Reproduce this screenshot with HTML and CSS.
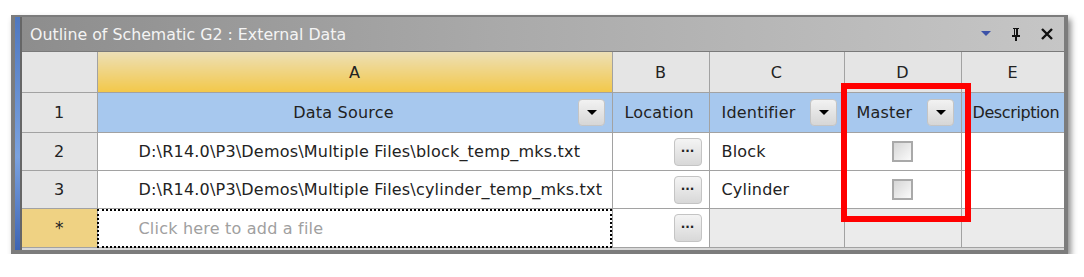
FILE: index.html
```html
<!DOCTYPE html>
<html lang="en">
<head>
    <meta charset="UTF-8">
    <title>Outline of Schematic G2 : External Data</title>
    <link rel="stylesheet" href="styles.css">
</head>
<body>

    <div class="panel">
        <div class="strip"></div>
        <div class="main">
            <div class="titlebar">
                <span class="title">Outline of Schematic G2 : External Data</span>
                <span class="tools">
                    <svg width="10" height="6" viewBox="0 0 10 6"><path d="M0 0h10L5 5z" fill="#3c52a8"/></svg>
                    <svg width="12" height="14" viewBox="0 0 12 14"><path d="M3 1h6v1h-1v6h2v2H7v4H5v-4H2V8h2V2H3z M5 2v6h1V2z" fill="#111"/></svg>
                    <svg width="12" height="12" viewBox="0 0 12 12"><path d="M1 1l10 10M11 1L1 11" stroke="#111" stroke-width="2.4"/></svg>
                </span>
            </div>

            <table class="grid">
                <colgroup>
                    <col class="c-num"><col class="c-a"><col class="c-b"><col class="c-c"><col class="c-d"><col class="c-e">
                </colgroup>
                <tr class="letters">
                    <th></th>
                    <th class="sel">A</th>
                    <th>B</th>
                    <th>C</th>
                    <th>D</th>
                    <th>E</th>
                </tr>
                <tr class="heads">
                    <td class="num">1</td>
                    <td><div class="cell"><span class="center">Data Source</span><span class="drop"></span></div></td>
                    <td><div class="cell">Location</div></td>
                    <td><div class="cell"><span class="grow">Identifier</span><span class="drop"></span></div></td>
                    <td><div class="cell"><span class="grow">Master</span><span class="drop"></span></div></td>
                    <td><div class="cell clip">Description</div></td>
                </tr>
                <tr>
                    <td class="num">2</td>
                    <td class="path">D:\R14.0\P3\Demos\Multiple Files\block_temp_mks.txt</td>
                    <td class="btn"><span class="dots">...</span></td>
                    <td class="ident">Block</td>
                    <td class="check"><span class="box"></span></td>
                    <td></td>
                </tr>
                <tr>
                    <td class="num">3</td>
                    <td class="path">D:\R14.0\P3\Demos\Multiple Files\cylinder_temp_mks.txt</td>
                    <td class="btn"><span class="dots">...</span></td>
                    <td class="ident">Cylinder</td>
                    <td class="check"><span class="box"></span></td>
                    <td></td>
                </tr>
                <tr class="newrow">
                    <td class="num star">*</td>
                    <td class="path hint">Click here to add a file</td>
                    <td class="btn"><span class="dots">...</span></td>
                    <td class="off"></td>
                    <td class="off"></td>
                    <td class="off"></td>
                </tr>
            </table>
        </div>
        <div class="mark"></div>
    </div>

</body>
</html>
```

FILE: styles.css
```css
body {
    margin: 0;
    background: #fff;
    font-family: 'DejaVu Sans', Verdana, sans-serif;
    font-size: 16px;
    letter-spacing: 0.2px;
    color: #222;
}
/* Panel frame */
.panel {
    position: relative;
    display: flex;
    width: 1049px;
    margin: 15px 0 0 11px;
    border: 4px solid #7c7c7c;
    border-top-width: 2px;
    box-shadow: 3px 4px 6px rgba(0, 0, 0, 0.45);
    background: #e6e6e6;
}
.strip {
    width: 5px;
    background: linear-gradient(#4f78c0, #7aa2e0 60%, #3d64b4);
    border-right: 2px solid #666;
}
.main {
    flex: 1;
    min-width: 0;
    border-bottom: 2px solid #d8d8d8;
}
.titlebar {
    height: 34px;
    display: flex;
    align-items: center;
    justify-content: space-between;
    padding: 0 11px 0 8px;
    background: linear-gradient(to right, #8d8d8d, #a9a9a9 45%, #c6c6c6);
    border-bottom: 1px solid #7a7a7a;
}
.title {
    color: #f4f4f4;
    font-size: 15.8px;
    letter-spacing: 0;
}
.tools {
    display: flex;
    align-items: center;
    gap: 19px;
}
/* Grid */
.grid {
    border-collapse: collapse;
    table-layout: fixed;
    width: 1042px;
}
.c-num { width: 75px; }
.c-a { width: 515px; }
.c-b { width: 97px; }
.c-c { width: 135px; }
.c-d { width: 117px; }
.c-e { width: 103px; }
.grid th, .grid td {
    border: 1px solid #a2a2a2;
    padding: 0;
    white-space: nowrap;
    overflow: hidden;
}
.grid tr:first-child th { border-top: none; }
.grid tr > :first-child { border-left: none; }
.grid tr > :last-child { border-right: none; }
.letters th {
    height: 40px;
    font-weight: normal;
    background: #e5e5e5;
}
.letters th.sel {
    background: linear-gradient(#ecdfb6, #f3c84a);
}
.grid td { height: 37px; background: #fff; }
.heads td { height: 39px; background: #a7c8ee; }
.grid td.num {
    background: #e5e5e5;
    text-align: center;
}
.grid td.star {
    background: #efd283;
    font-size: 17px;
}
.cell {
    display: flex;
    align-items: center;
    padding: 0 7px 0 12px;
}
.center { flex: 1; text-align: center; }
.grow { flex: 1; }
.clip {
    padding: 0 0 0 11px;
    letter-spacing: -0.4px;
}
.drop {
    width: 25px;
    height: 25px;
    border: 1px solid #c4c4c4;
    border-radius: 4px;
    background: linear-gradient(#f2f2f2, #d6d6d6);
    position: relative;
}
.drop::after {
    content: "";
    position: absolute;
    left: 8px;
    top: 10px;
    border-left: 5px solid transparent;
    border-right: 5px solid transparent;
    border-top: 5px solid #000;
}
.path { padding-left: 41px !important; }
.hint { color: #a0a0a0; }
.newrow td { height: 38px; }
.newrow .path {
    outline: 2px dotted #000;
    outline-offset: -2px;
}
.btn { text-align: right; padding-right: 7px !important; }
.dots {
    display: inline-block;
    width: 26px;
    height: 26px;
    line-height: 18px;
    text-align: center;
    vertical-align: middle;
    border: 1px solid #c4c4c4;
    border-radius: 4px;
    background: linear-gradient(#f4f4f4, #d8d8d8);
    font-weight: bold;
    font-size: 12px;
    letter-spacing: 0;
}
.ident { padding-left: 12px !important; }
.check { text-align: center; }
.box {
    display: inline-block;
    width: 17px;
    height: 17px;
    vertical-align: middle;
    border: 2px solid #a9a9a9;
    background: linear-gradient(135deg, #d6d6d6, #fafafa);
}
.grid td.off { background: #ebebeb; }
/* Red highlight over column D */
.mark {
    position: absolute;
    left: 826px;
    top: 66px;
    width: 118px;
    height: 127px;
    border: 6px solid #ff0000;
}
```
